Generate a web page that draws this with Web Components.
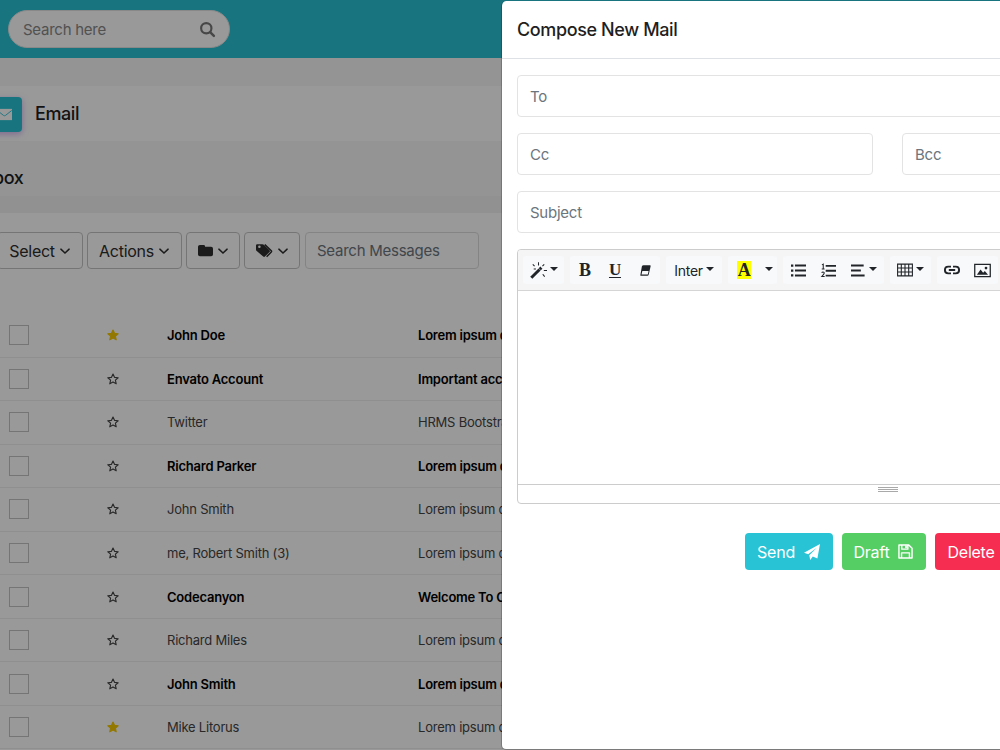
<!DOCTYPE html>
<html lang="en">
<head>
<meta charset="utf-8">
<title>Email</title>
<style>
html, body {
    height: 100%;
    margin: 0;
    overflow: hidden;
}
body {
    font-family: Inter, "Liberation Sans", sans-serif;
    font-size: 15px;
    letter-spacing: -.25px;
    color: #1f1f1f;
    --accent: #28c3d4;
}
</style>
</head>
<body>
<mail-app>
    <mail-topbar></mail-topbar>
    <page-title>Email</page-title>
    <inbox-heading>Inbox</inbox-heading>
    <mail-card>
        <mail-toolbar slot="toolbar"></mail-toolbar>
        <mail-row unread starred from="John Doe">Lorem ipsum dolor sit amet</mail-row>
        <mail-row unread from="Envato Account">Important account security update</mail-row>
        <mail-row from="Twitter">HRMS Bootstrap Admin Template</mail-row>
        <mail-row unread from="Richard Parker">Lorem ipsum dolor sit amet</mail-row>
        <mail-row from="John Smith">Lorem ipsum dolor sit amet</mail-row>
        <mail-row from="me, Robert Smith (3)">Lorem ipsum dolor sit amet</mail-row>
        <mail-row unread from="Codecanyon">Welcome To Codecanyon</mail-row>
        <mail-row from="Richard Miles">Lorem ipsum dolor sit amet</mail-row>
        <mail-row unread from="John Smith">Lorem ipsum dolor sit amet</mail-row>
        <mail-row starred from="Mike Litorus">Lorem ipsum dolor sit amet</mail-row>
    </mail-card>
    <compose-modal slot="modal">
        <span slot="title">Compose New Mail</span>
        <form-field>To</form-field>
        <div class="pair" style="display:grid;grid-template-columns:356px 356px;column-gap:29px">
            <form-field>Cc</form-field>
            <form-field>Bcc</form-field>
        </div>
        <form-field>Subject</form-field>
        <rich-editor></rich-editor>
        <action-button slot="actions" style="--bg:#28c3d4;width:88px">Send<ui-icon name="send" size="16" slot="icon"></ui-icon></action-button>
        <action-button slot="actions" style="--bg:#55ce63;width:84px">Draft<ui-icon name="save" size="15" slot="icon"></ui-icon></action-button>
        <action-button slot="actions" style="--bg:#f62d51;width:97px">Delete<ui-icon name="trash" size="15" slot="icon"></ui-icon></action-button>
    </compose-modal>
</mail-app>

<script>
const icons = {
    search: `<circle cx="6.700" cy="6.700" r="5.500" fill="none" stroke="currentColor" stroke-width="2.300"/><path d="M10.800 10.800 14.800 14.800" stroke="currentColor" stroke-width="2.600" stroke-linecap="round"/>`,
    mail: `<path d="M0 2h16v12H0z"/><path d="M.3 3.7 7 9q1 .7 2 0l6.700-5.300" fill="none" stroke="var(--accent)" stroke-width="1"/>`,
    chevron: `<path d="M2.500 5.500 8 10.800 13.500 5.500" fill="none" stroke="currentColor" stroke-width="1.900" stroke-linecap="round"/>`,
    folder: `<path d="M2 2h4q1.500 0 1.500 1.500V4H14q2 0 2 2v6q0 2-2 2H2q-2 0-2-2V4q0-2 2-2z"/>`,
    tags: `<path d="M0 3.200Q0 2 1.200 2H6q.8 0 1.500.7l5.200 5.100q.8.8 0 1.600l-4.300 4.300q-.8.8-1.600 0L.700 8.500Q0 7.900 0 7zm2 1.300a1.200 1.200 0 1 0 2.400 0 1.200 1.200 0 1 0-2.400 0z" fill-rule="evenodd"/><path d="M8.300 2.400 14.400 8.200q.6.600 0 1.200L10 13.900" fill="none" stroke="currentColor" stroke-width="1.400"/>`,
    star: `<path d="m8 1.300 2 4.500 4.900.5-3.700 3.300 1.100 4.800L8 11.900l-4.300 2.500 1.100-4.800L1.100 6.300 6 5.800z" style="fill:var(--star)" stroke="currentColor" stroke-width="1.500" stroke-linejoin="round"/>`,
    send: `<path d="M16 0 13.400 14.500 8.800 12.500 6.200 16 5.300 11.200 12.800 3.800 4.200 10.300 0 8.800z"/>`,
    save: `<path d="M1 1h10.500L15 4.500V15H1z M4 1v4.500h6.500V1 M3.800 15V9.500h8.400V15" fill="none" stroke="currentColor" stroke-width="1.500" stroke-linejoin="round"/><path d="M7.500 1.500h2V4.500h-2z"/>`,
    trash: `<path d="M1 3h14M5.500 3V1h5v2M3 3.500V15h10V3.500M6 6v6M8 6v6M10 6v6" fill="none" stroke="currentColor" stroke-width="1.400"/>`,
    magic: `<path d="M1.200 14.800 9 7" stroke="currentColor" stroke-width="2.800"/><path d="m9.200 6.800 1.500-1.500" stroke="currentColor" stroke-width="2.800"/><path d="M8 .2v3M2.600 2.200l1.700 1.700M13.400 2.200l-1.700 1.700M13 8h3M12 11.500l1.800 2.200M3.500 6.500H5.600" fill="none" stroke="currentColor" stroke-width="1"/>`,
    eraser: `<path d="M5.500 1.500h8q1.200 0 .8 1.200L12 13q-.4 1.500-1.700 1.500H2.500q-1.100 0-.8-1.100L3.500 3q.5-1.500 2-1.500zM4.100 8.500 3.100 12.900h7.100q.6 0 .8-.7l.8-3.700z" fill-rule="evenodd"/>`,
    ul: `<path d="M0 1.500h2.500V4H0zM0 6.800h2.500v2.500H0zM0 12h2.500v2.500H0zM4.200 1.700H16v2.100H4.200zM4.200 7H16v2.100H4.200zM4.200 12.200H16v2.100H4.200z"/>`,
    ol: `<path d="M5 2h11v2.100H5zM5 7.200h11v2.100H5zM5 12.400h11v2.100H5z"/><path d="M1 2 2.400 1.200v5M.8 6.300h3M.8 10.500q.3-1 1.400-1 1.300 0 1.300 1.200 0 .8-2.700 3.800h3.100" fill="none" stroke="currentColor" stroke-width="1.100"/>`,
    align: `<path d="M0 1.700h13.500v2.100H0zM0 7h10.500v2.100H0zM0 12.200h14.500v2.100H0z"/>`,
    table: `<path d="M.6 2.100h14.800v11.800H.6zM.6 6h14.800M.6 10h14.800M4.300 2v12M8 2v12M11.700 2v12" fill="none" stroke="currentColor" stroke-width="1.100"/>`,
    link: `<path d="M7 4.600H4.200Q.9 4.600.9 8t3.300 3.400H7M9 4.600h2.800q3.300 0 3.300 3.400t-3.300 3.400H9M4.800 8h6.400" fill="none" stroke="currentColor" stroke-width="1.900"/>`,
    picture: `<path d="M.7 2.200h14.600v11.600H.7z" fill="none" stroke="currentColor" stroke-width="1.200"/><path d="m2.700 12 3.500-5 2.400 3 1.600-1.500 3 3.500z"/><circle cx="11.300" cy="5.700" r="1.300"/>`
};

customElements.define("ui-icon", class extends HTMLElement {
    constructor() {
        super();
        this.attachShadow({ mode: "open" });
    }
    connectedCallback() {
        const size = this.getAttribute("size") || 16;
        this.shadowRoot.innerHTML = /*html*/`
        <style>
        :host { display: inline-flex; flex: none; }
        svg { display: block; overflow: visible; fill: currentColor; }
        </style>
        <svg width="${size}" height="${size}" viewBox="0 0 16 16">${icons[this.getAttribute("name")]}</svg>
        `;
    }
});

// Elements that only need static markup
function define(name, html) {
    const template = document.createElement("template");
    template.innerHTML = html;
    customElements.define(name, class extends HTMLElement {
        constructor() {
            super();
            this.attachShadow({ mode: "open" });
            this.shadowRoot.appendChild(template.content.cloneNode(true));
        }
    });
}

define("mail-app", /*html*/`
<style>
:host {
    display: block;
    position: relative;
    height: 750px;
    overflow: hidden;
    background: #f7f7f7;
}
.backdrop {
    position: absolute;
    inset: 0;
    background: rgba(0, 0, 0, .4);
}
</style>
<slot></slot>
<div class="backdrop"></div>
<slot name="modal"></slot>
`);

define("mail-topbar", /*html*/`
<style>
:host {
    display: flex;
    align-items: center;
    height: 58px;
    padding-left: 8px;
    background: var(--accent);
}
.search {
    display: flex;
    align-items: center;
    justify-content: space-between;
    box-sizing: border-box;
    width: 222px;
    height: 38px;
    padding: 0 14px;
    border: 1px solid #e3e3e3;
    border-radius: 19px;
    background: #fff;
    color: #888;
}
</style>
<div class="search"><span>Search here</span><ui-icon name="search" size="15" style="color:#777"></ui-icon></div>
`);

define("page-title", /*html*/`
<style>
:host {
    display: flex;
    align-items: center;
    gap: 13px;
    height: 55px;
    margin-top: 28px;
    background: #fff;
    font-size: 18px;
    font-weight: 500;
    letter-spacing: -.4px;
}
.badge {
    display: flex;
    align-items: center;
    justify-content: center;
    width: 36px;
    height: 35px;
    margin: 1px 0 0 -14px;
    border-radius: 4px;
    background: var(--accent);
    color: #fff;
    box-shadow: 0 2px 6px rgba(160, 100, 230, .5);
}
</style>
<div class="badge"><ui-icon name="mail" size="15"></ui-icon></div>
<slot></slot>
`);

define("inbox-heading", /*html*/`
<style>
:host {
    display: flex;
    align-items: center;
    box-sizing: border-box;
    height: 72px;
    padding-left: 1px;
    margin-left: -23px;
    border-bottom: 17px solid #f2f2f2;
    padding-top: 17px;
    font-size: 18px;
    font-weight: 500;
    letter-spacing: -.4px;
}
</style>
<slot></slot>
`);

define("mail-card", /*html*/`
<style>
:host {
    display: block;
    height: 560px;
    padding-top: 19px;
    background: #fff;
}
.rows {
    margin-top: 45px;
}
</style>
<slot name="toolbar"></slot>
<div class="rows"><slot></slot></div>
`);

define("mail-toolbar", /*html*/`
<style>
:host {
    display: flex;
    height: 37px;
    margin-left: -3px;
    color: #2d2d2d;
    font-size: 16px;
}
.btn, .search {
    display: flex;
    align-items: center;
    box-sizing: border-box;
    border: 1px solid #c4c4c4;
    border-radius: 4px;
}
.btn {
    justify-content: center;
    gap: 4px;
    margin-right: 4px;
}
.icons {
    gap: 4px;
}
.search {
    width: 174px;
    margin-left: 1px;
    padding-left: 11px;
    border-color: #ddd;
    color: #6c757d;
    font-size: 15px;
}
</style>
<div class="btn" style="width:86px">Select<ui-icon name="chevron" size="12"></ui-icon></div>
<div class="btn" style="width:95px">Actions<ui-icon name="chevron" size="12"></ui-icon></div>
<div class="btn icons" style="width:54px"><ui-icon name="folder" size="15"></ui-icon><ui-icon name="chevron" size="12"></ui-icon></div>
<div class="btn icons" style="width:56px"><ui-icon name="tags" size="17"></ui-icon><ui-icon name="chevron" size="12"></ui-icon></div>
<div class="search">Search Messages</div>
`);

customElements.define("mail-row", class extends HTMLElement {
    constructor() {
        super();
        this.attachShadow({ mode: "open" });
    }
    connectedCallback() {
        this.shadowRoot.innerHTML = /*html*/`
        <style>
        :host {
            display: grid;
            grid-template-columns: 98px 60px 251px 1fr;
            align-items: center;
            box-sizing: border-box;
            height: 43.55px;
            padding-left: 9px;
            border-bottom: 1px solid #efefef;
            color: #444;
            font-size: 13px;
            letter-spacing: -.22px;
            white-space: nowrap;
        }
        :host([unread]) { color: #000; font-weight: 600; }
        .box {
            box-sizing: border-box;
            width: 20px;
            height: 20px;
            border: 1px solid #c4c4c4;
        }
        .star { display: flex; color: #444; --star: none; }
        :host([starred]) .star { color: #f5c800; --star: #f5c800; }
        </style>
        <div class="box"></div>
        <div class="star"><ui-icon name="star" size="12"></ui-icon></div>
        <div>${this.getAttribute("from")}</div>
        <div><slot></slot></div>
        `;
    }
});

define("compose-modal", /*html*/`
<style>
:host {
    position: absolute;
    top: 1px;
    left: 501px;
    box-sizing: border-box;
    width: 774px;
    height: 749px;
    border: 1px solid rgba(0, 0, 0, .2);
    border-top: 0;
    border-radius: 5px;
    background: #fff;
    background-clip: padding-box;
}
header {
    display: flex;
    align-items: center;
    box-sizing: border-box;
    height: 58px;
    padding-left: 15px;
    border-bottom: 1px solid #dee2e6;
    font-size: 18px;
    font-weight: 500;
    letter-spacing: -.38px;
}
.body {
    display: flex;
    flex-direction: column;
    gap: 16px;
    padding: 16px 15px;
}
.actions {
    display: flex;
    justify-content: center;
    gap: 9px;
    margin-top: 13px;
}
</style>
<header><slot name="title"></slot></header>
<div class="body">
    <slot></slot>
    <div class="actions"><slot name="actions"></slot></div>
</div>
`);

define("form-field", /*html*/`
<style>
:host {
    display: flex;
    align-items: center;
    box-sizing: border-box;
    height: 42px;
    padding: 1px 0 0 12px;
    border: 1px solid #e3e3e3;
    border-radius: 4px;
    color: #6c757d;
}
</style>
<slot></slot>
`);

define("rich-editor", /*html*/`
<style>
:host {
    display: block;
    box-sizing: border-box;
    height: 255px;
    border: 1px solid #ccc;
    border-radius: 4px;
    overflow: hidden;
    color: #212529;
    font-size: 14px;
}
.toolbar {
    display: flex;
    align-items: center;
    gap: 6px;
    box-sizing: border-box;
    height: 41px;
    padding-left: 5px;
    border-bottom: 1px solid #d5d5d5;
    background: #f5f5f5;
}
.group {
    display: flex;
    height: 28px;
    border-radius: 3px;
    background: #f8f9fa;
}
.group > * {
    display: flex;
    align-items: center;
    justify-content: center;
    gap: 3px;
}
.caret::after {
    content: "";
    border: 4px solid transparent;
    border-top-color: currentColor;
    border-bottom: 0;
    margin-top: -3px;
}
.serif {
    font: bold 18px "Liberation Serif", serif;
}
.mark {
    padding: 0 1px;
    background: #ff0;
    line-height: 18px;
}
.area {
    height: 193px;
}
.status {
    display: flex;
    flex-direction: column;
    align-items: center;
    gap: 1px;
    height: 18px;
    padding-top: 2px;
    border-top: 1px solid #ccc;
}
.status i {
    width: 20px;
    height: 1px;
    background: #a9a9a9;
}
</style>
<div class="toolbar">
    <div class="group"><span class="caret" style="width:41px"><ui-icon name="magic" size="17"></ui-icon></span></div>
    <div class="group">
        <span class="serif" style="width:30px">B</span>
        <span class="serif" style="width:30px;font-size:17px;text-decoration:underline;text-underline-offset:2px">U</span>
        <span style="width:30px"><ui-icon name="eraser" size="13"></ui-icon></span>
    </div>
    <div class="group"><span class="caret" style="width:56px">Inter</span></div>
    <div class="group">
        <span style="width:32px"><b class="serif mark">A</b></span>
        <span class="caret" style="width:17px"></span>
    </div>
    <div class="group">
        <span style="width:30px"><ui-icon name="ul" size="15"></ui-icon></span>
        <span style="width:30px"><ui-icon name="ol" size="15"></ui-icon></span>
        <span class="caret" style="width:41px"><ui-icon name="align" size="15"></ui-icon></span>
    </div>
    <div class="group"><span class="caret" style="width:41px"><ui-icon name="table" size="16"></ui-icon></span></div>
    <div class="group">
        <span style="width:30px"><ui-icon name="link" size="16"></ui-icon></span>
        <span style="width:31px"><ui-icon name="picture" size="17"></ui-icon></span>
    </div>
</div>
<div class="area"></div>
<div class="status"><i></i><i></i><i></i></div>
`);

define("action-button", /*html*/`
<style>
:host {
    display: flex;
    align-items: center;
    justify-content: center;
    gap: 9px;
    height: 37px;
    border-radius: 4px;
    background: var(--bg);
    color: #fff;
    font-size: 16px;
}
</style>
<slot></slot>
<slot name="icon"></slot>
`);
</script>
</body>
</html>
